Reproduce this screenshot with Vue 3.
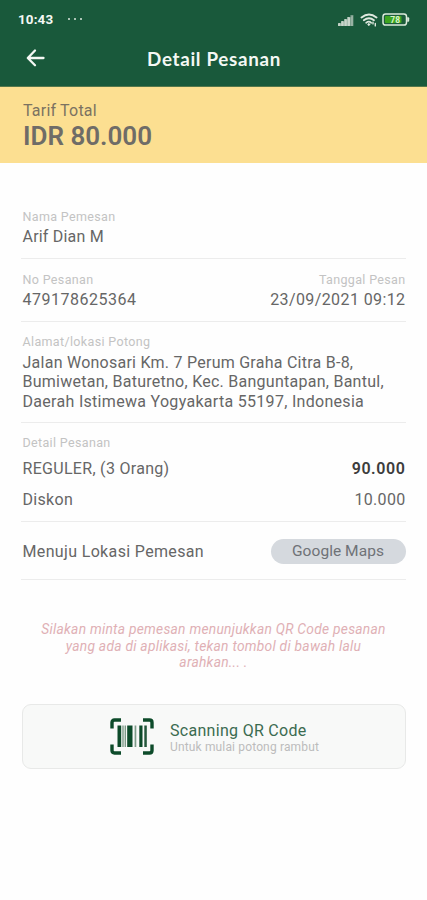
<script setup>
const signalBars = [3, 5, 7, 9, 11]
const address = [
  'Jalan Wonosari Km. 7 Perum Graha Citra B-8,',
  'Bumiwetan, Baturetno, Kec. Banguntapan, Bantul,',
  'Daerah Istimewa Yogyakarta 55197, Indonesia',
]
const notice = [
  'Silakan minta pemesan menunjukkan QR Code pesanan',
  'yang ada di aplikasi, tekan tombol di bawah lalu',
  'arahkan... .',
]
</script>

<template>
  <div class="screen">
    <header class="header">
      <div class="status">
        <span class="time">10:43</span>
        <span class="dots"><i></i><i></i><i></i></span>
        <span class="status-icons">
          <svg class="signal" width="16" height="12" viewBox="0 0 16 12">
            <path d="M0 12L15.5 1V12z" fill="#d5ded5" opacity=".35" />
            <rect v-for="(h, i) in signalBars" :key="h" :x="i * 3.1" :y="12 - h" width="2.7" :height="h" rx=".6" fill="#d5ded5" :opacity="i === 4 ? 0.5 : 0.9" />
          </svg>
          <svg class="wifi" width="18" height="14" viewBox="0 0 18 14" fill="none" stroke="#dfe9df" stroke-linecap="round">
            <path d="M1.5 4.5Q9-1.5 16.5 4.5" stroke-width="1.9" />
            <path d="M3.8 7.3Q9 3.2 14 7.3" stroke-width="1.8" />
            <path d="M6.1 9.8Q9 7.5 11.2 9.8" stroke-width="1.7" />
            <circle cx="8.8" cy="11.5" r=".9" fill="#dfe9df" />
            <path d="M13 9.3v1.6M15.3 10.5v2.4" stroke-width="1.4" />
          </svg>
          <svg class="battery" width="28" height="13" viewBox="0 0 28 13">
            <rect x="1" y="1" width="23.5" height="11" rx="2.6" fill="#1c5c3b" stroke="#dceadb" stroke-width="1.5" />
            <rect x="3" y="3" width="16.5" height="7" rx=".8" fill="#3da51f" />
            <path d="M25.2 4.2h1q1 0 1 1v2.6q0 1-1 1h-1z" fill="#dceadb" />
            <text x="13.2" y="9.8" text-anchor="middle" class="charge">78</text>
          </svg>
        </span>
      </div>
      <div class="titlebar">
        <svg class="back" width="20" height="20" viewBox="0 0 20 20" fill="none" stroke="#f4f8f4" stroke-width="2.3" stroke-linecap="round" stroke-linejoin="round">
          <path d="M17.5 10H2M9 2.5L1.8 10L9 17.3" />
        </svg>
        <h1>Detail Pesanan</h1>
      </div>
    </header>

    <section class="total">
      <div class="total-label">Tarif Total</div>
      <div class="total-value">IDR 80.000</div>
    </section>

    <main class="content">
      <section class="row name">
        <div class="label">Nama Pemesan</div>
        <div class="value v-name">Arif Dian M</div>
      </section>
      <section class="row order">
        <div>
          <div class="label">No Pesanan</div>
          <div class="value v-no">479178625364</div>
        </div>
        <div class="right">
          <div class="label">Tanggal Pesan</div>
          <div class="value">23/09/2021 09:12</div>
        </div>
      </section>
      <section class="row address">
        <div class="label">Alamat/lokasi Potong</div>
        <div v-for="(line, i) in address" :key="line" :class="['value', 'a' + i]">{{ line }}</div>
      </section>
      <section class="row details">
        <div class="label">Detail Pesanan</div>
        <div class="item"><span>REGULER, (3 Orang)</span><b>90.000</b></div>
        <div class="item discount"><span>Diskon</span><span>10.000</span></div>
      </section>
      <section class="row location">
        <span>Menuju Lokasi Pemesan</span>
        <button class="maps">Google Maps</button>
      </section>
      <div class="notice">
        <div v-for="line in notice" :key="line">{{ line }}</div>
      </div>
      <button class="scan">
        <svg width="44" height="37" viewBox="0 0 44 37">
          <path d="M2 10.5V4.5Q2 2 4.5 2h6.5M33 2h6.5Q42 2 42 4.5v6M42 26.5v6q0 2.5-2.5 2.5H33M11 35H4.500Q2 35 2 32.500v-6" fill="none" stroke="#0d4b2a" stroke-width="3.4" />
          <path d="M7.500 7.500h3.700v21.500H7.500zM17.200 7.500h5.300v21.500h-5.300zM29.300 7.500h3.200v21.500h-3.200z" fill="#0d4b2a" />
          <path d="M12.300 7.500h1.400v21.500h-1.400zM14.600 7.500h1.400v21.500h-1.400zM24.600 7.500h1.700v21.500h-1.700z" fill="#7e9c89" />
          <path d="M34.300 7.500h2.500v21.500h-2.500z" fill="#24573b" />
        </svg>
        <span class="scan-text">
          <span class="scan-title">Scanning QR Code</span>
          <span class="scan-sub">Untuk mulai potong rambut</span>
        </span>
      </button>
    </main>
  </div>
</template>

<style>
body { margin: 0; background: #fefefe; }
</style>

<style scoped>
.screen { width: 427px; height: 900px; overflow: hidden; background: #fefefe; font-family: Roboto, sans-serif; color: #666; box-sizing: border-box; }
.header { height: 87px; box-sizing: border-box; background: #19593b; color: #f4f8f4; border-bottom: 1px solid #54774b; }
.status { height: 39px; display: flex; align-items: center; padding: 0 17px 0 18px; }
.time { font-size: 13.4px; font-weight: 700; letter-spacing: .15px; width: 50px; }
.dots { display: flex; gap: 3.6px; padding-bottom: 1px; }
.dots i { width: 2.3px; height: 2.3px; border-radius: 50%; background: #dce8df; }
.status-icons { margin-left: auto; display: flex; align-items: center; gap: 6px; }
.wifi { margin-right: -2px; }
.charge { font: 700 8.5px Roboto, sans-serif; fill: #d9f4cc; }
.titlebar { height: 38px; display: grid; grid-template-columns: 1fr auto 1fr; align-items: center; }
.back { margin-left: 26px; }
h1 { margin: 1px 0 0 1px; font: 700 18.8px/26px Lato, sans-serif; letter-spacing: .68px; white-space: nowrap; }
.total { height: 76px; box-sizing: border-box; padding: 14px 23px 0; background: #fcdf91; white-space: nowrap; }
.total-label { font-size: 16px; line-height: 20px; letter-spacing: .2px; color: #7b7261; }
.total-value { font-size: 26px; line-height: 31px; font-weight: 600; color: #6f6c67; }
.content { padding: 41px 21px 0; }
.row { box-sizing: border-box; border-bottom: 1px solid #ececec; padding: 0 0 0 1.5px; white-space: nowrap; }
.label { font-size: 12.5px; line-height: 16px; color: #c3c3c3; letter-spacing: .35px; }
.value { font-size: 16px; line-height: 19.5px; letter-spacing: .4px; margin-top: 0; }
.v-name { letter-spacing: .2px; }
.v-no { letter-spacing: .5px; }
.a0 { letter-spacing: .25px; }
.a1 { letter-spacing: .26px; }
.a2 { letter-spacing: .3px; }
.name { height: 55px; padding-top: 5px; }
.label + .value { margin-top: 2px; }
.order { height: 63px; padding-top: 13px; display: flex; justify-content: space-between; }
.right { text-align: right; }
.address { height: 101px; padding-top: 12px; }
.address .label + .value { margin-top: 2.5px; }
.details { height: 99px; padding-top: 12px; }
.item { display: flex; justify-content: space-between; font-size: 16px; line-height: 20px; margin-top: 8px; letter-spacing: .3px; }
.item b { font-weight: 600; color: #3c3c3c; letter-spacing: .6px; }
.discount { margin-top: 11px; }
.location { height: 58px; display: flex; align-items: center; justify-content: space-between; font-size: 16px; letter-spacing: .35px; padding-top: 1px; }
button { border: 0; padding: 0; margin: 0; font-family: Roboto, sans-serif; }
.maps { width: 135px; height: 25px; border-radius: 13px; background: #d5d9de; color: #6f7277; font-size: 15.5px; letter-spacing: .05px; }
.row.order, .row.details, .row.location { padding-right: .5px; }
.notice { margin-top: 41px; text-align: center; color: #e0b0b5; font-size: 13.8px; line-height: 16.7px; font-style: italic; letter-spacing: .26px; white-space: nowrap; }
.scan { width: 384px; height: 65px; margin: 33px 0 0 1px; box-sizing: border-box; border: 1px solid #e8e9e8; border-radius: 9px; background: #f8f9f8; display: flex; align-items: center; padding-left: 86.500px; gap: 16.500px; text-align: left; }
.scan svg { margin-bottom: 1px; }
.scan-text { display: flex; flex-direction: column; padding-top: 2px; white-space: nowrap; }
.scan-title { font-size: 16px; line-height: 19px; color: #3b6b50; letter-spacing: .3px; }
.scan-sub { font-size: 12px; line-height: 15px; color: #bcbcbc; letter-spacing: .15px; }
</style>
